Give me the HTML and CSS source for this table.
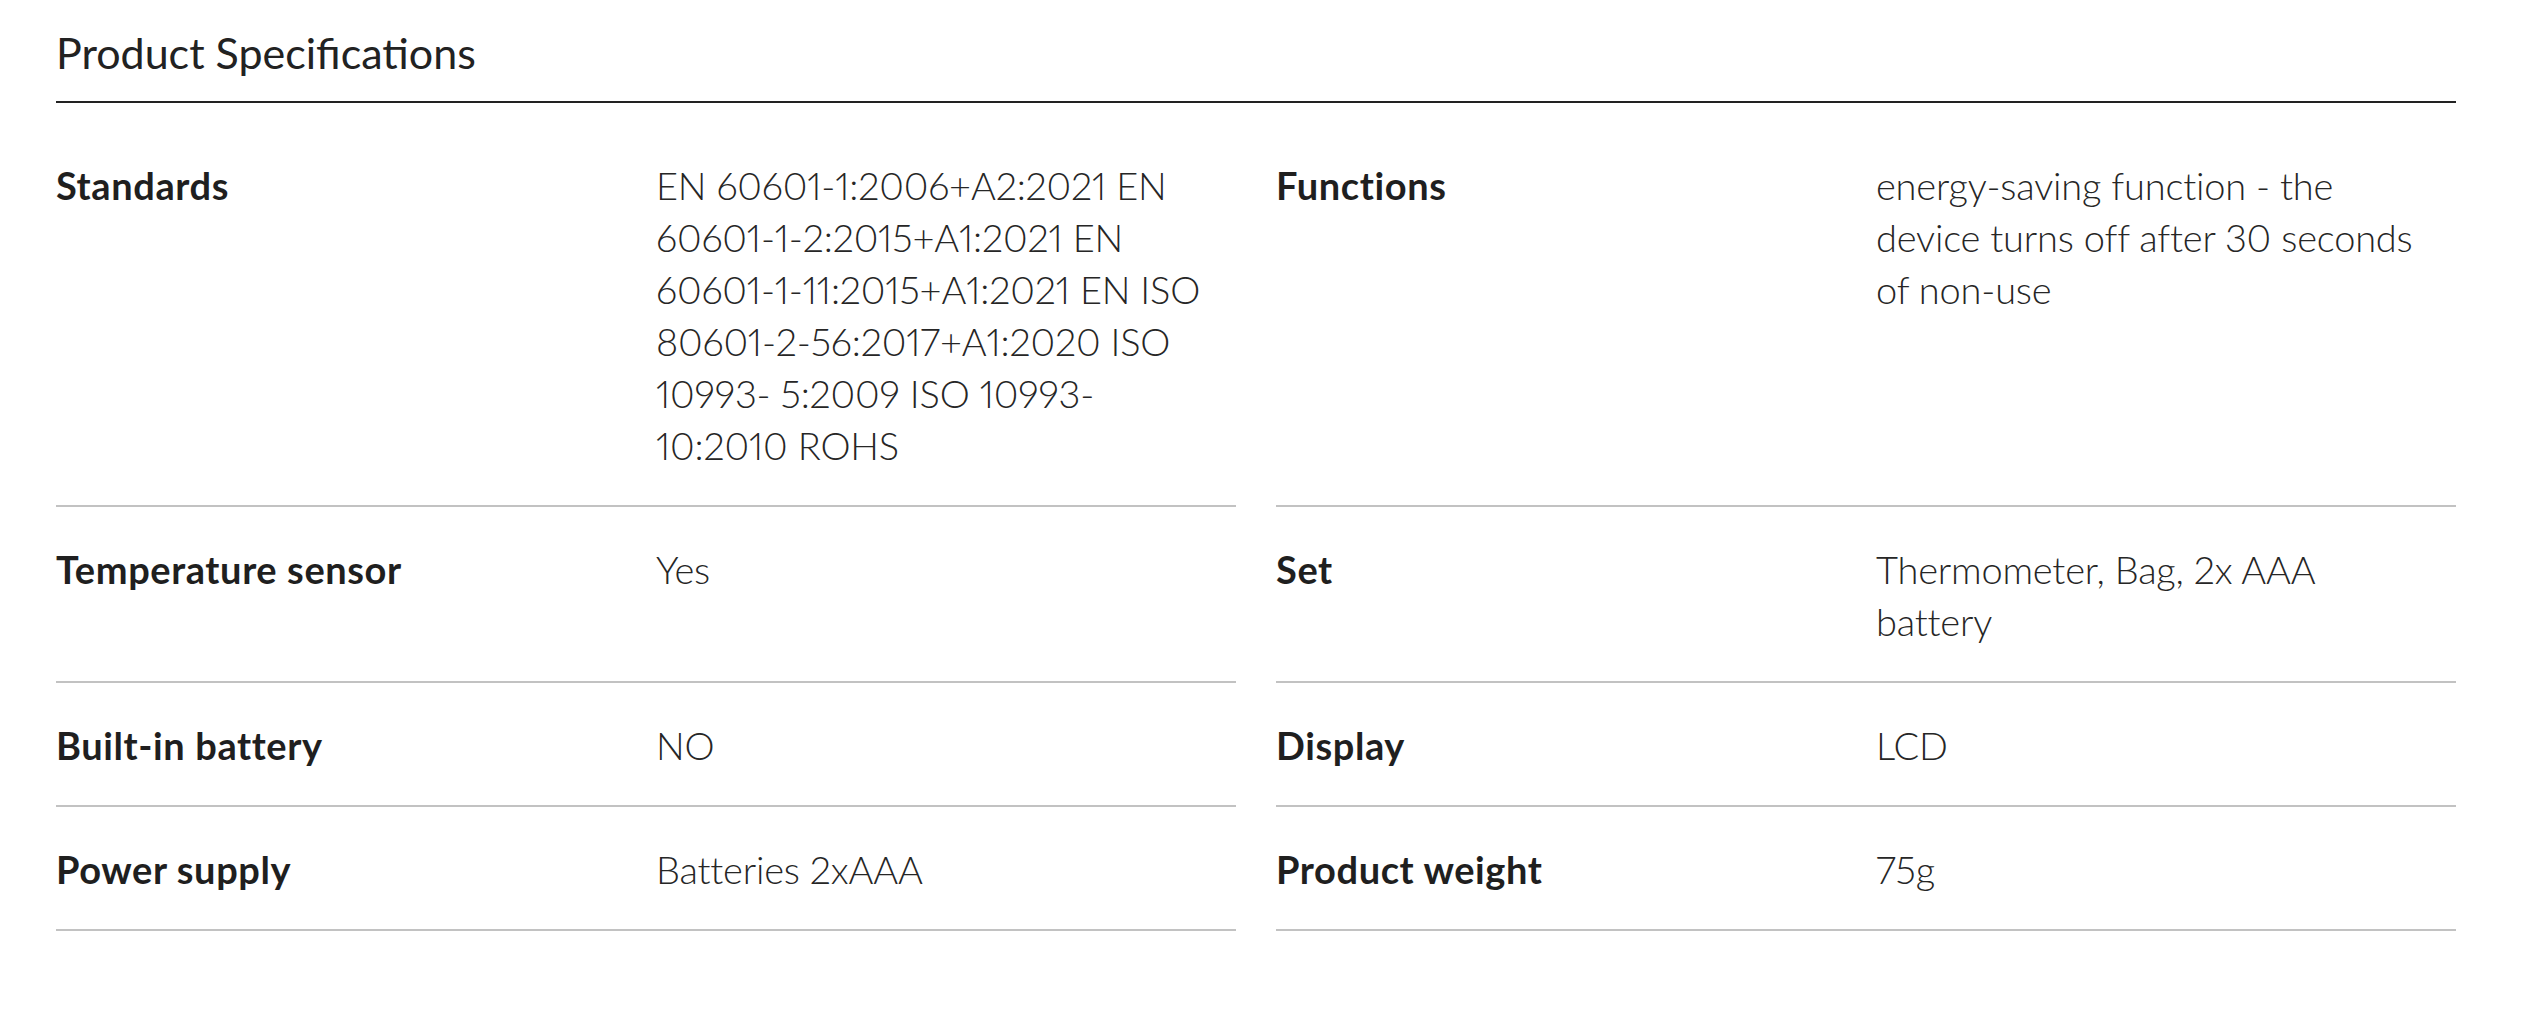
FILE: index.html
```html
<!DOCTYPE html>
<html lang="en">
<head>
  <meta charset="UTF-8">
  <title>Product Specifications</title>
  <link rel="stylesheet" href="styles.css">
</head>
<body>
  <section class="specs">
    <h2 class="specs-title">Product Specifications</h2>

    <div class="specs-grid">
      <div class="spec-row">
        <div class="spec-label">Standards</div>
        <div class="spec-value">EN 60601-1:2006+A2:2021 EN 60601-1-2:2015+A1:2021 EN 60601-1-11:2015+A1:2021 EN ISO 80601-2-56:2017+A1:2020 ISO 10993- 5:2009 ISO 10993-10:2010 ROHS</div>
      </div>
      <div class="spec-row">
        <div class="spec-label">Functions</div>
        <div class="spec-value">energy-saving function - the device turns off after 30 seconds of non-use</div>
      </div>

      <div class="spec-row">
        <div class="spec-label">Temperature sensor</div>
        <div class="spec-value">Yes</div>
      </div>
      <div class="spec-row">
        <div class="spec-label">Set</div>
        <div class="spec-value">Thermometer, Bag, 2x AAA battery</div>
      </div>

      <div class="spec-row">
        <div class="spec-label">Built-in battery</div>
        <div class="spec-value">NO</div>
      </div>
      <div class="spec-row">
        <div class="spec-label">Display</div>
        <div class="spec-value">LCD</div>
      </div>

      <div class="spec-row">
        <div class="spec-label">Power supply</div>
        <div class="spec-value">Batteries 2xAAA</div>
      </div>
      <div class="spec-row">
        <div class="spec-label">Product weight</div>
        <div class="spec-value">75g</div>
      </div>
    </div>
  </section>
</body>
</html>
```

FILE: styles.css
```css
body {
  margin: 0;
  background: #fff;
  color: #1f1f1f;
  font-family: Lato, "Open Sans", Arial, sans-serif;
}

.specs {
  width: 2400px;
  margin-left: 56px;
  padding-top: 27px;
}

.specs-title {
  margin: 0;
  padding-bottom: 22px;
  border-bottom: 2px solid #222;
  font-size: 43px;
  font-weight: 400;
  line-height: 1.2;
  color: #222;
}

.specs-grid {
  display: grid;
  grid-template-columns: 1fr 1fr;
  column-gap: 40px;
  padding-top: 20px;
}

.spec-row {
  display: grid;
  grid-template-columns: 600px 1fr;
  padding: 36px 0 34px;
  border-bottom: 2px solid #c2c2c2;
  font-size: 38px;
  line-height: 52px;
}

.spec-label {
  font-weight: 700;
  letter-spacing: 0.6px;
  color: #1f1f1f;
}

.spec-value {
  padding-right: 30px;
  font-weight: 300;
  font-variant-numeric: proportional-nums;
  letter-spacing: -0.2px;
  color: #262626;
}
```
